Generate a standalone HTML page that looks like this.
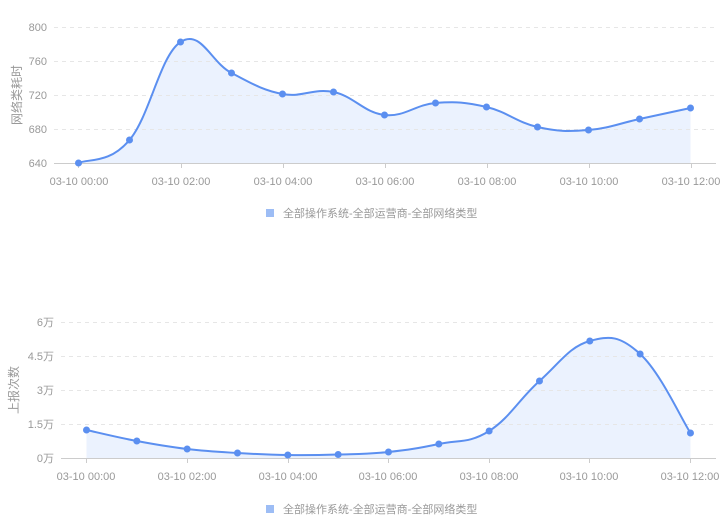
<!DOCTYPE html>
<html><head><meta charset="utf-8"><style>
html,body{margin:0;padding:0;background:#fff;width:726px;height:518px;overflow:hidden}
svg{display:block}
text{font-family:"Liberation Sans","Noto Sans CJK SC",sans-serif;font-size:11px;fill:#999}
</style></head><body>
<svg id="s" width="726" height="518" xmlns="http://www.w3.org/2000/svg">
<g stroke="#e6e6e6" stroke-dasharray="4,4" stroke-width="1">
<line x1="54" y1="27.5" x2="716" y2="27.5"/><line x1="54" y1="61.5" x2="716" y2="61.5"/><line x1="54" y1="95.5" x2="716" y2="95.5"/><line x1="54" y1="129.5" x2="716" y2="129.5"/>
<line x1="61" y1="322.5" x2="716" y2="322.5"/><line x1="61" y1="356.5" x2="716" y2="356.5"/><line x1="61" y1="390.5" x2="716" y2="390.5"/><line x1="61" y1="424.5" x2="716" y2="424.5"/>
</g>
<g stroke="#ccc" stroke-width="1">
<line x1="54" y1="163.5" x2="716" y2="163.5"/><line x1="61" y1="458.5" x2="716" y2="458.5"/>
<line x1="78.5" y1="163" x2="78.5" y2="168"/><line x1="181.5" y1="163" x2="181.5" y2="168"/><line x1="283.5" y1="163" x2="283.5" y2="168"/><line x1="385.5" y1="163" x2="385.5" y2="168"/><line x1="487.5" y1="163" x2="487.5" y2="168"/><line x1="589.5" y1="163" x2="589.5" y2="168"/><line x1="691.5" y1="163" x2="691.5" y2="168"/>
<line x1="86.5" y1="458" x2="86.5" y2="463"/><line x1="187.5" y1="458" x2="187.5" y2="463"/><line x1="288.5" y1="458" x2="288.5" y2="463"/><line x1="388.5" y1="458" x2="388.5" y2="463"/><line x1="489.5" y1="458" x2="489.5" y2="463"/><line x1="589.5" y1="458" x2="589.5" y2="463"/><line x1="690.5" y1="458" x2="690.5" y2="463"/>
</g>
<g text-anchor="end">
<text x="47" y="31">800</text><text x="47" y="65">760</text><text x="47" y="99">720</text><text x="47" y="133">680</text><text x="47" y="167">640</text>
<text x="54" y="326">6万</text><text x="54" y="360">4.5万</text><text x="54" y="394">3万</text><text x="54" y="428">1.5万</text><text x="54" y="462">0万</text>
</g>
<g text-anchor="middle">
<text x="79" y="185">03-10 00:00</text><text x="181" y="185">03-10 02:00</text><text x="283" y="185">03-10 04:00</text><text x="385" y="185">03-10 06:00</text><text x="487" y="185">03-10 08:00</text><text x="589" y="185">03-10 10:00</text><text x="691" y="185">03-10 12:00</text>
<text x="86" y="480">03-10 00:00</text><text x="187" y="480">03-10 02:00</text><text x="288" y="480">03-10 04:00</text><text x="388" y="480">03-10 06:00</text><text x="489" y="480">03-10 08:00</text><text x="589" y="480">03-10 10:00</text><text x="690" y="480">03-10 12:00</text>
</g>
<text transform="translate(21,95) rotate(-90)" text-anchor="middle" style="font-size:12px">网络类耗时</text>
<text transform="translate(18,390) rotate(-90)" text-anchor="middle" style="font-size:12px">上报次数</text>
<rect x="266" y="209" width="8" height="8" fill="#9dbdf5"/><text x="283" y="217">全部操作系统-全部运营商-全部网络类型</text>
<rect x="266" y="505" width="8" height="8" fill="#9dbdf5"/><text x="283" y="513">全部操作系统-全部运营商-全部网络类型</text>
</svg>
<script>
function draw(xs,ys,base){
 var s=document.getElementById('s'),n=xs.length,d='M'+xs[0]+','+ys[0],t=0.2;
 for(var i=0;i<n-1;i++){
  var p0=i?i-1:i,p3=i+2<n?i+2:i+1;
  var c1x=xs[i]+(xs[i+1]-xs[p0])*t,c1y=ys[i]+(ys[i+1]-ys[p0])*t;
  var c2x=xs[i+1]-(xs[p3]-xs[i])*t,c2y=ys[i+1]-(ys[p3]-ys[i])*t;
  d+=' C'+c1x+','+c1y+' '+c2x+','+c2y+' '+xs[i+1]+','+ys[i+1];
 }
 var ns='http://www.w3.org/2000/svg';
 var a=document.createElementNS(ns,'path');a.setAttribute('d',d+' L'+xs[n-1]+','+base+' L'+xs[0]+','+base+'Z');a.setAttribute('fill','#ebf2fe');s.insertBefore(a,s.firstChild);
 var l=document.createElementNS(ns,'path');l.setAttribute('d',d);l.setAttribute('fill','none');l.setAttribute('stroke','#5b8ff0');l.setAttribute('stroke-width','2');s.appendChild(l);
 for(var i=0;i<n;i++){var c=document.createElementNS(ns,'circle');c.setAttribute('cx',xs[i]);c.setAttribute('cy',ys[i]);c.setAttribute('r','3.5');c.setAttribute('fill','#5b8ff0');s.appendChild(c);}
}
var x1=[],x2=[];for(var i=0;i<13;i++){x1.push(78.5+51*i);x2.push(86.5+50.33*i);}
draw(x1,[163,140,42,73,94,92,115,103,107,127,130,119,108],163);
draw(x2,[430,441,449,453,455,454.5,452,444,431,381,341,354,433],458);
</script>
</body></html>
